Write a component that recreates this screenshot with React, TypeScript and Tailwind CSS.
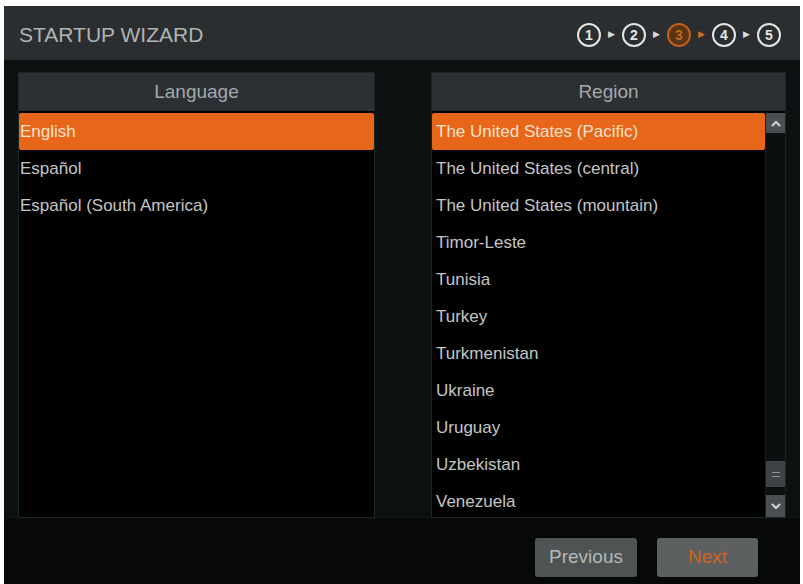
import React from 'react';

const languages = ['English', 'Español', 'Español (South America)'];

const regions = [
  'The United States (Pacific)',
  'The United States (central)',
  'The United States (mountain)',
  'Timor-Leste',
  'Tunisia',
  'Turkey',
  'Turkmenistan',
  'Ukraine',
  'Uruguay',
  'Uzbekistan',
  'Venezuela',
];

const StepDot = ({ n, active }: { n: number; active?: boolean }) => (
  <div
    className={
      active
        ? 'w-[24px] h-[24px] rounded-full border-2 border-[#c0601c] bg-[#5a3414] text-[#c06a20] flex items-center justify-center text-[14px] font-bold leading-none'
        : 'w-[24px] h-[24px] rounded-full border-2 border-[#e4e6e6] text-[#e4e6e6] flex items-center justify-center text-[14px] font-bold leading-none'
    }
  >
    {n}
  </div>
);

const StepArrow = ({ active }: { active?: boolean }) => (
  <span className={active ? 'text-[9px] text-[#d86a1c] mx-[7px]' : 'text-[9px] text-[#d8dada] mx-[7px]'}>
    ▶
  </span>
);

const Steps = () => (
  <div className="flex items-center">
    <StepDot n={1} />
    <StepArrow />
    <StepDot n={2} />
    <StepArrow />
    <StepDot n={3} active />
    <StepArrow active />
    <StepDot n={4} />
    <StepArrow />
    <StepDot n={5} />
  </div>
);

type ListProps = {
  title: string;
  items: string[];
  selected: number;
  scroll?: boolean;
  className: string;
  rowPad: string;
};

const ListPanel = ({ title, items, selected, scroll, className, rowPad }: ListProps) => (
  <div className={`flex flex-col bg-black border border-[#1c2626] overflow-hidden ${className}`}>
    <div className="h-[38px] shrink-0 bg-[#2c3034] flex items-center justify-center text-[19px] text-[#a4a8ac]">
      {title}
    </div>
    <div className="flex flex-1 min-h-0 pt-[2px]">
      <div className="flex-1 flex flex-col">
        {items.map((item, i) => (
          <div
            key={item}
            className={
              i === selected
                ? `h-[37px] shrink-0 flex items-center ${rowPad} bg-[#e8661a] text-[#fbe2cc] rounded-[2px] text-[17px]`
                : `h-[37px] shrink-0 flex items-center ${rowPad} text-[#c4c6c6] text-[17px]`
            }
          >
            {item}
          </div>
        ))}
      </div>
      {scroll && (
        <div className="w-[20px] flex flex-col bg-[#0c0f0f] border-l border-[#1a2020]">
          <div className="h-[20px] bg-[#4a5052] flex items-center justify-center">
            <svg width="10" height="7" viewBox="0 0 10 7">
              <path d="M1 6 L5 2 L9 6" stroke="#d0d4d4" strokeWidth="2" fill="none" />
            </svg>
          </div>
          <div className="flex-1" />
          <div className="h-[26px] bg-[#3e4446] flex flex-col items-center justify-center gap-[3px]">
            <div className="w-[8px] h-[1px] bg-[#8a9090]" />
            <div className="w-[8px] h-[1px] bg-[#8a9090]" />
          </div>
          <div className="h-[8px]" />
          <div className="h-[22px] bg-[#4a5052] flex items-center justify-center">
            <svg width="10" height="7" viewBox="0 0 10 7">
              <path d="M1 1 L5 5 L9 1" stroke="#d0d4d4" strokeWidth="2" fill="none" />
            </svg>
          </div>
        </div>
      )}
    </div>
  </div>
);

export default function App() {
  return (
    <div
      className="w-[803px] h-[584px] bg-white pt-[6px] pl-[4px] pr-[3px] overflow-hidden"
      style={{ fontFamily: '"Liberation Sans", Arial, sans-serif' }}
    >
      <div className="h-full flex flex-col bg-[#070909]">
        <div className="h-[54px] shrink-0 bg-[#2a2e30] flex items-center justify-between pl-[15px] pr-[19px] pt-[3px]">
          <span className="text-[21px] text-[#b0b4b4]">STARTUP WIZARD</span>
          <Steps />
        </div>
        <div className="flex px-[14px] pt-[12px] gap-[56px] bg-[#0b1111] pb-[1px]">
          <ListPanel className="w-[358px] h-[446px]" rowPad="pl-[1px]" title="Language" items={languages} selected={0} />
          <ListPanel className="w-[356px] h-[446px]" rowPad="pl-[4px]" title="Region" items={regions} selected={0} scroll />
        </div>
        <div className="flex-1 flex items-start justify-end gap-[20px] pr-[42px] pt-[19px]">
          <button className="w-[102px] h-[39px] rounded-[3px] bg-[#4e5454] text-[#b4b8b8] text-[19px]">
            Previous
          </button>
          <button className="w-[101px] h-[39px] rounded-[3px] bg-[#5c6060] text-[#d0641c] text-[19px]">
            Next
          </button>
        </div>
      </div>
    </div>
  );
}
